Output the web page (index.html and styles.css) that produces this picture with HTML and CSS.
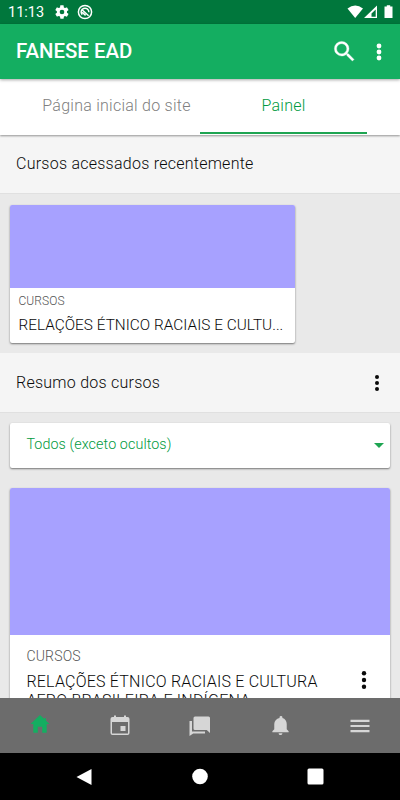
FILE: index.html
```html
<!DOCTYPE html>
<html lang="pt-BR">
<head>
  <meta charset="UTF-8">
  <title>FANESE EAD</title>
  <meta name="viewport" content="width=device-width, initial-scale=1.0">
  <link rel="stylesheet" href="styles.css">
</head>
<body>

<div class="status-bar">
  <span class="clock">11:13</span>
  <svg class="gear" viewBox="0 0 24 24" width="16" height="16"><path fill="currentColor" d="M19.4 13c0-.3.1-.6.1-1s0-.7-.1-1l2.1-1.600c.2-.2.3-.4.1-.7l-2-3.400c-.1-.2-.4-.3-.6-.2l-2.500 1c-.5-.4-1.100-.7-1.700-1l-.4-2.600c0-.3-.2-.5-.5-.5h-4c-.2 0-.4.2-.5.4l-.4 2.700c-.6.3-1.200.6-1.700 1l-2.500-1c-.2-.1-.5 0-.6.2l-2 3.400c-.1.2-.1.5.1.7l2.100 1.600c0 .3-.1.6-.1 1s0 .7.1 1l-2.100 1.600c-.2.2-.3.4-.1.700l2 3.400c.1.200.4.300.6.200l2.500-1c.5.4 1.100.700 1.700 1l.4 2.600c0 .3.2.5.5.5h4c.3 0 .5-.2.5-.4l.4-2.600c.6-.3 1.200-.6 1.700-1l2.500 1c.2.100.5 0 .6-.2l2-3.400c.1-.2.1-.5-.1-.7zM12 15.500a3.500 3.500 0 1 1 0-7 3.500 3.500 0 0 1 0 7z"/></svg>
  <svg class="sync" viewBox="0 0 16 16" width="16" height="16" fill="none" stroke="currentColor" stroke-width="1.500"><circle cx="8" cy="8" r="6.600"/><path d="M5.200 10.800A3.900 3.900 0 1 1 11.900 8.200M5.600 6.200l6 5.600M5.200 8.200l3.400 3.200"/></svg>
  <svg class="signals" viewBox="0 0 48 16" width="48" height="16">
    <path fill="currentColor" d="M.5 4.500Q8.200-1.600 16 4.500L8.200 14z"/>
    <path fill="currentColor" fill-rule="evenodd" d="M30 1.500V14H17zM28.700 5.500l-4.200 4V12.700h4.200z"/>
    <path fill="currentColor" d="M39.800 1.200h3.400v1.300h2.300V14h-8V2.500h2.300z"/>
  </svg>
</div>

<div class="toolbar">
  <h1>FANESE EAD</h1>
  <svg viewBox="0 0 24 24" width="27" height="27"><path fill="currentColor" stroke="currentColor" stroke-width=".3" d="M15.500 14h-.79l-.28-.27A6.470 6.470 0 0 0 16 9.500 6.500 6.500 0 1 0 9.500 16c1.610 0 3.090-.59 4.230-1.570l.27.28v.79l5 4.990L20.490 19zm-6 0C7.010 14 5 11.990 5 9.500S7.010 5 9.500 5 14 7.010 14 9.500 11.990 14 9.500 14z"/></svg>
  <svg class="dots" viewBox="0 0 6 18" width="6" height="18"><circle cx="3" cy="3" r="2.400"/><circle cx="3" cy="9" r="2.400"/><circle cx="3" cy="15" r="2.400"/></svg>
</div>

<div class="tabs">
  <div class="tab">Página inicial do site</div>
  <div class="tab active">Painel</div>
</div>

<div class="content">
  <div class="divider recent">Cursos acessados recentemente</div>
  <div class="card small">
    <div class="cover"></div>
    <div class="info">
      <div class="category">CURSOS</div>
      <div class="name">RELAÇÕES ÉTNICO RACIAIS E CULTU...</div>
    </div>
  </div>

  <div class="divider summary">
    <span>Resumo dos cursos</span>
    <svg class="dots" viewBox="0 0 6 18" width="6" height="18"><circle cx="3" cy="3" r="2"/><circle cx="3" cy="9" r="2"/><circle cx="3" cy="15" r="2"/></svg>
  </div>
  <div class="card select">
    <span>Todos (exceto ocultos)</span>
    <i class="caret"></i>
  </div>

  <div class="card large">
    <div class="cover"></div>
    <div class="info">
      <div class="category">CURSOS</div>
      <div class="row">
        <div class="name">RELAÇÕES ÉTNICO RACIAIS E CULTURA AFRO BRASILEIRA E INDÍGENA</div>
        <svg class="dots" viewBox="0 0 6 20" width="6" height="20"><circle cx="3" cy="3.200" r="2.200"/><circle cx="3" cy="10" r="2.200"/><circle cx="3" cy="16.800" r="2.200"/></svg>
      </div>
    </div>
  </div>
</div>

<div class="bottom-tabs">
  <div class="item active"><svg viewBox="0 0 20 20" width="20" height="20"><path fill="currentColor" d="M10 1L.5 10H3.300v8.700h4.500V12.700h4.400v6h4.500V10h2.800l-3.500-3.300V4h-1.500v1.300z"/></svg></div>
  <div class="item"><svg viewBox="0 0 24 24" width="24" height="24"><path fill="currentColor" d="M17.500 12h-5v5h5v-5zM16 1.500v1.500H8V1.500H6v1.500H4.500A2 2 0 0 0 2.500 5v14a2 2 0 0 0 2 2h15a2 2 0 0 0 2-2V5a2 2 0 0 0-2-2H18V1.500h-2zm4 18H4V8h16v11.500z"/></svg></div>
  <div class="item"><svg viewBox="0 0 22 20" width="22" height="20"><path fill="currentColor" d="M6 .5h13.500a1.500 1.500 0 0 1 1.500 1.500v15l-3.200-3H6A1.500 1.500 0 0 1 4.500 12.500V2A1.500 1.500 0 0 1 6 .5zM.5 5H3v10.500h13v2H4.200L.5 20z"/></svg></div>
  <div class="item"><svg viewBox="0 0 24 24" width="23" height="23"><path fill="currentColor" d="M12 22c1.100 0 2-.9 2-2h-4a2 2 0 0 0 2 2zm6.500-6v-5.500c0-3.070-1.640-5.640-4.500-6.320V3.500a1.500 1.500 0 0 0-3 0v.68C7.630 4.860 5.500 7.420 5.500 10.500V16l-2 2v1h17v-1z"/></svg></div>
  <div class="item"><svg viewBox="0 0 20 14" width="20" height="14"><path fill="none" stroke="currentColor" stroke-width="2.200" d="M.5 1.800h19M.5 7h19M.5 12.200h19"/></svg></div>
</div>

<div class="system-nav">
  <svg viewBox="0 0 18 18" width="18" height="18"><path d="M15.500 1v16L.5 9z"/></svg>
  <svg viewBox="0 0 18 18" width="18" height="18"><circle cx="9" cy="8.500" r="7.800"/></svg>
  <svg viewBox="0 0 18 18" width="18" height="18"><rect x=".5" y=".5" width="16" height="16" rx="1.500"/></svg>
</div>

</body>
</html>
```
FILE: styles.css
```css
:root {
  --green: #14ae61;
  --green-dark: #00773c;
  --accent: #1ea552;
  --cover: #a7a1ff;
  --page: #e9e9e9;
  --text: #0a0a0a;
}
* {
  box-sizing: border-box;
}
body {
  margin: 0;
  height: 100vh;
  display: flex;
  flex-direction: column;
  overflow: hidden;
  background: var(--page);
  color: var(--text);
  font-family: Roboto, "Liberation Sans", sans-serif;
  font-size: 16px;
  font-weight: 300;
}
svg {
  display: block;
  flex: none;
}
.dots {
  fill: currentColor;
}
.status-bar {
  height: 24px;
  flex: none;
  display: flex;
  align-items: center;
  padding: 0 5px 0 8px;
  background: var(--green-dark);
  color: #fff;
}
.clock {
  width: 46px;
  padding-top: 2px;
  font-size: 14.5px;
  font-weight: 400;
  line-height: 22px;
}
.sync {
  margin-left: 7px;
}
.signals {
  margin-left: auto;
}
.toolbar {
  height: 55px;
  flex: none;
  display: flex;
  align-items: center;
  padding: 0 18px 0 16px;
  background: var(--green);
  color: #fff;
  z-index: 2;
  box-shadow: 0 1px 3px rgba(0, 0, 0, .35);
}
.toolbar h1 {
  flex: 1;
  margin: 0;
  padding-bottom: 1px;
  font-size: 20.4px;
  font-weight: 500;
}
.toolbar .dots {
  margin-left: 18px;
}
.tabs {
  height: 56px;
  flex: none;
  display: flex;
  padding: 0 33px;
  background: #fff;
  z-index: 1;
  box-shadow: 0 1px 2px rgba(0, 0, 0, .4);
}
.tab {
  flex: 1;
  height: 55px;
  line-height: 54px;
  text-align: center;
  white-space: nowrap;
  letter-spacing: .25px;
  color: #808080;
}
.tab.active {
  color: #009a40;
  border-bottom: 2px solid var(--accent);
}
.content {
  flex: 1;
  min-height: 0;
  overflow: hidden;
}
.divider {
  display: flex;
  align-items: center;
  justify-content: space-between;
  padding: 0 20px 0 16px;
  background: #f5f5f5;
  border-bottom: 1px solid #e0e0e0;
  letter-spacing: .25px;
}
.recent {
  height: 59px;
  padding-bottom: 2px;
}
.summary {
  height: 60px;
  margin-top: 9px;
}
.card {
  margin: 0 10px 0 10.4px;
  background: #fff;
  border-radius: 2px;
  overflow: hidden;
  box-shadow: 0 1px 2px rgba(0, 0, 0, .5);
}
.cover {
  background: var(--cover);
}
.category {
  color: #555;
}
.small {
  width: 285px;
  height: 138px;
  margin-top: 11px;
  margin-bottom: 10px;
}
.small .cover {
  height: 83px;
}
.small .info {
  padding: 6px 8px;
}
.small .category {
  font-size: 12px;
  letter-spacing: .1px;
  line-height: 15px;
}
.small .name {
  margin-top: 6px;
  font-size: 15.3px;
  letter-spacing: .05px;
  line-height: 20px;
  white-space: nowrap;
}
.select {
  height: 45px;
  margin-top: 10px;
  display: flex;
  align-items: center;
  justify-content: space-between;
  padding: 0 6px 3px 16px;
  color: #009a40;
  font-size: 14.3px;
  letter-spacing: .1px;
}
.caret {
  border: 5px solid transparent;
  border-top-color: var(--accent);
  border-bottom: 0;
  margin-top: 3px;
}
.large {
  margin-top: 20px;
}
.large .cover {
  height: 147px;
}
.large .info {
  padding: 13px 23px 20px 16px;
}
.large .category {
  font-size: 14px;
  letter-spacing: .2px;
  line-height: 16px;
}
.large .row {
  display: flex;
  justify-content: space-between;
  margin-top: 8px;
}
.large .name {
  width: 310px;
  font-size: 16px;
  letter-spacing: .22px;
  line-height: 19px;
}
.large .dots {
  margin-top: -2px;
}
.bottom-tabs {
  height: 55px;
  flex: none;
  display: flex;
  background: #6c6c6c;
  color: #d6d6d6;
}
.bottom-tabs .item {
  flex: 1;
  display: flex;
  align-items: center;
  justify-content: center;
}
.bottom-tabs .active {
  padding-bottom: 3px;
  color: var(--green);
}
.system-nav {
  height: 47px;
  flex: none;
  display: flex;
  align-items: center;
  justify-content: center;
  gap: 97.5px;
  background: #000;
  fill: #fff;
}
```
